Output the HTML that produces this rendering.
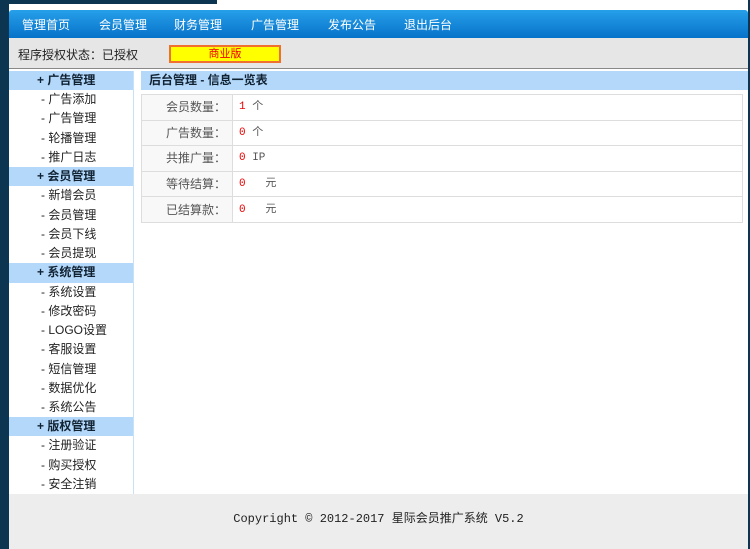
<!DOCTYPE html>
<html><head><meta charset="utf-8"><style>
*{margin:0;padding:0;box-sizing:border-box}
body{width:750px;height:549px;background:#fff;position:relative;overflow:hidden;font-family:"Liberation Sans","Noto Sans CJK SC",sans-serif;font-size:12px}
.dk{position:absolute;background:#0b3550}
#nav{position:absolute;left:9px;top:10px;width:739px;height:28px;background:linear-gradient(#27a0ea,#0672c9);border-radius:3px 3px 0 0}
#nav span{position:absolute;top:6px;color:#fff;font-size:12px}
#st{position:absolute;left:9px;top:38px;width:739px;height:31px;background:#e6e6e6;border-bottom:1px solid #888}
#st .t{position:absolute;left:9px;top:8px;color:#222}
#st .b{position:absolute;left:160px;top:7px;width:112px;height:18px;background:#ff0;border:2px solid #f07030;color:#e00;text-align:center;font-size:11px;line-height:15px}
#side{position:absolute;left:9px;top:71px;width:125px;height:423px;border-right:1px solid #c8e0f8}
#side div{height:19.24px;line-height:19px;padding-left:32px;color:#222;font-size:12px}
#side div.h{background:#b3d8fa;padding-left:28px;font-weight:bold;color:#123}
#ch{position:absolute;left:141px;top:71px;width:607px;height:19px;background:#b3d8fa;font-weight:bold;line-height:19px;padding-left:8px;color:#123}
table{position:absolute;left:141px;top:94px;width:602px;border-collapse:collapse;border:1px solid #ddd}
td{height:25.6px;border:1px solid #ddd;font-family:"Liberation Mono","Noto Sans CJK SC",monospace;font-size:11px;color:#555;vertical-align:middle;line-height:14px}
td.l{width:91px;text-align:right;padding-right:6px;background:#f8f8f8;font-family:"Liberation Sans","Noto Sans CJK SC",sans-serif;font-size:12px}
td.v{padding-left:6px}
.r{color:#e00}
#ft{position:absolute;left:9px;top:494px;width:739px;height:55px;background:#ededed;text-align:center;padding-top:15px;font-family:"Liberation Mono","Noto Sans CJK SC",monospace;font-size:12px;color:#222}
</style></head><body>
<div class="dk" style="left:0;top:0;width:9px;height:549px"></div>
<div class="dk" style="left:0;top:0;width:217px;height:4px"></div>
<div class="dk" style="left:748px;top:0;width:2px;height:549px"></div>
<div id="nav"><span style="left:13px">管理首页</span><span style="left:90px">会员管理</span><span style="left:165px">财务管理</span><span style="left:242px">广告管理</span><span style="left:319px">发布公告</span><span style="left:395px">退出后台</span></div>
<div id="st"><span class="t">程序授权状态：已授权</span><span class="b">商业版</span></div>
<div id="side">
<div class="h">+ 广告管理</div><div>- 广告添加</div><div>- 广告管理</div><div>- 轮播管理</div><div>- 推广日志</div>
<div class="h">+ 会员管理</div><div>- 新增会员</div><div>- 会员管理</div><div>- 会员下线</div><div>- 会员提现</div>
<div class="h">+ 系统管理</div><div>- 系统设置</div><div>- 修改密码</div><div>- LOGO设置</div><div>- 客服设置</div><div>- 短信管理</div><div>- 数据优化</div><div>- 系统公告</div>
<div class="h">+ 版权管理</div><div>- 注册验证</div><div>- 购买授权</div><div>- 安全注销</div>
</div>
<div id="ch">后台管理 - 信息一览表</div>
<table>
<tr><td class="l">会员数量：</td><td class="v"><span class="r">1</span> 个</td></tr>
<tr><td class="l">广告数量：</td><td class="v"><span class="r">0</span> 个</td></tr>
<tr><td class="l">共推广量：</td><td class="v"><span class="r">0</span> IP</td></tr>
<tr><td class="l">等待结算：</td><td class="v"><span class="r">0</span>&nbsp;&nbsp; 元</td></tr>
<tr><td class="l">已结算款：</td><td class="v"><span class="r">0</span>&nbsp;&nbsp; 元</td></tr>
</table>
<div id="ft">Copyright © 2012-2017 星际会员推广系统 V5.2</div>
</body></html>
